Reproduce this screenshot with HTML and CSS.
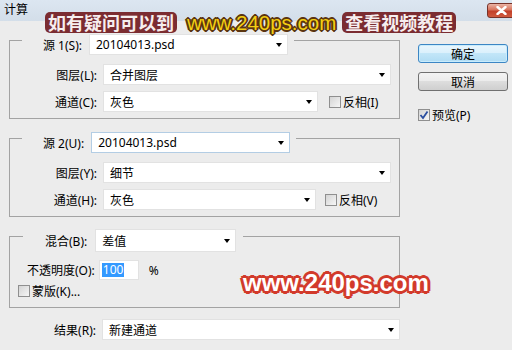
FILE: index.html
```html
<!DOCTYPE html>
<html lang="zh-CN">
<head>
  <meta charset="UTF-8">
  <title>计算</title>
  <link rel="stylesheet" href="styles.css">
</head>
<body>
  <div class="window">
    <div class="titlebar">
      <span class="title">计算</span>
      <span class="close">
        <svg width="11" height="9" viewBox="0 0 11 9"><path d="M1.5 1 L9.5 8 M9.5 1 L1.5 8" stroke="#fff" stroke-width="2.4" stroke-linecap="round"/></svg>
      </span>
    </div>

    <div class="content">
      <div class="main">
        <!-- source 1 -->
        <div class="group">
          <div class="group-head">
            <span>源 1(S):</span>
            <div class="select w-src">20104013.psd</div>
          </div>
          <div class="row">
            <span class="row-label">图层(L):</span>
            <div class="select w-wide">合并图层</div>
          </div>
          <div class="row">
            <span class="row-label">通道(C):</span>
            <div class="select w-chan">灰色</div>
            <span class="check"><i class="box"></i>反相(I)</span>
          </div>
        </div>

        <!-- source 2 -->
        <div class="group">
          <div class="group-head">
            <span>源 2(U):</span>
            <div class="select focus w-src">20104013.psd</div>
          </div>
          <div class="row">
            <span class="row-label">图层(Y):</span>
            <div class="select w-wide">细节</div>
          </div>
          <div class="row">
            <span class="row-label">通道(H):</span>
            <div class="select w-chan2">灰色</div>
            <span class="check check-tight"><i class="box"></i>反相(V)</span>
          </div>
        </div>

        <!-- blending -->
        <div class="group group-blend">
          <div class="group-head">
            <span>混合(B):</span>
            <div class="select tall w-blend">差值</div>
          </div>
          <div class="opacity-row">
            <span>不透明度(O):</span>
            <div class="input"><span class="selected">100</span></div>
            <span class="pct">%</span>
          </div>
          <div class="mask-row">
            <span class="check"><i class="box"></i>蒙版(K)...</span>
          </div>
        </div>

        <div class="row result-row">
          <span class="row-label">结果(R):</span>
          <div class="select w-result">新建通道</div>
        </div>
      </div>

      <div class="side">
        <div class="btn btn-default">确定</div>
        <div class="btn btn-cancel">取消</div>
        <span class="check preview">
          <i class="box">
            <svg width="10" height="10" viewBox="0 0 10 10"><path d="M1.5 5 L4 8 L8.5 1.5" fill="none" stroke="#2a4ea0" stroke-width="1.8"/></svg>
          </i>预览(P)
        </span>
      </div>
    </div>

    <!-- watermarks -->
    <div class="wm-top">
      <span class="wm-tag">如有疑问可以到</span>
      <span class="wm-url">www.240ps.com</span>
      <span class="wm-tag">查看视频教程</span>
    </div>
    <div class="wm-bottom">www.240ps.com</div>
  </div>
</body>
</html>
```

FILE: styles.css
```css
* {
  box-sizing: border-box;
}
body {
  margin: 0;
  width: 512px;
  height: 350px;
  overflow: hidden;
  background: #ececec;
  font-family: "Noto Sans", "Noto Sans CJK SC", sans-serif;
  font-size: 12px;
  color: #000;
}
.window {
  position: relative;
  height: 350px;
}
.titlebar {
  height: 21px;
  display: flex;
  justify-content: space-between;
  align-items: flex-start;
  padding-left: 4px;
  background: linear-gradient(#dce6f1, #d3dee9);
}
.title {
  line-height: 20px;
}
.close {
  margin-top: 3px;
  margin-right: -4px;
  width: 29px;
  height: 15px;
  border: 1px solid #77332a;
  border-radius: 3px;
  background: linear-gradient(#eab4a6, #d7735c 45%, #c2402a 55%, #cf5a3e);
  display: flex;
  align-items: center;
  justify-content: center;
}
.content {
  display: flex;
  gap: 18px;
  padding: 19px 0 0 9px;
}
.main {
  width: 391px;
}
.group {
  border: 1px solid #a3a3a3;
  padding-bottom: 6px;
  margin-bottom: 19px;
}
.group-head {
  display: flex;
  align-items: center;
  gap: 7px;
  width: fit-content;
  margin: -7px 0 9px 12px;
  padding: 0 6px 0 21px;
  background: #ececec;
}
.row {
  display: flex;
  align-items: center;
  height: 21px;
}
.row + .row {
  margin-top: 6px;
}
.row-label {
  width: 87px;
  margin-right: 6px;
  text-align: right;
}
.select {
  height: 21px;
  display: flex;
  align-items: center;
  justify-content: space-between;
  padding: 0 5px 0 6px;
  background: #fff;
  border: 1px solid #e2e2e2;
}
.select::after {
  content: "";
  border-left: 3.5px solid transparent;
  border-right: 3.5px solid transparent;
  border-top: 4px solid #000;
}
.select.focus {
  border-color: #b3cde4;
}
.select.tall {
  height: 23px;
}
.w-src { width: 199px; }
.w-wide { width: 288px; }
.w-chan { width: 215px; }
.w-chan2 { width: 213px; }
.w-blend { width: 141px; }
.w-result { width: 298px; }

.check {
  display: flex;
  align-items: center;
  gap: 2px;
  margin-left: 11px;
}
.check-tight {
  margin-left: 9px;
}
.box {
  width: 12px;
  height: 12px;
  border: 1px solid #8f8f8f;
  background: linear-gradient(135deg, #d4d4d4, #f6f6f6);
  display: flex;
  align-items: center;
  justify-content: center;
}

.group-blend {
  padding-bottom: 10px;
  margin-bottom: 11px;
}
.group-blend .group-head {
  gap: 8px;
  margin: -8px 0 8px 13px;
  padding: 0 7px 0 22px;
}
.opacity-row {
  display: flex;
  align-items: center;
  height: 20px;
  padding-left: 17px;
}
.input {
  width: 40px;
  height: 20px;
  margin-left: 4px;
  padding-left: 2px;
  display: flex;
  align-items: center;
  background: #fff;
  border: 1px solid #e2e2e2;
}
.selected {
  background: #3399ff;
  color: #fff;
  line-height: 14px;
  padding: 0 1px;
}
.pct {
  margin-left: 10px;
}
.mask-row {
  height: 13px;
  margin-top: 4px;
  display: flex;
  align-items: center;
}
.mask-row .check {
  margin-left: 8px;
}

.side {
  width: 90px;
  padding-top: 4px;
  display: flex;
  flex-direction: column;
}
.btn {
  height: 19px;
  border-radius: 3px;
  display: flex;
  align-items: center;
  justify-content: center;
}
.btn-default {
  border: 1px solid #3c86c4;
  background: linear-gradient(#eaf6fd, #d9f0fc 50%, #c2e6f8 50%, #b0dcf4);
  box-shadow: inset 0 0 0 1px #c9ecfc;
}
.btn-cancel {
  margin-top: 9px;
  border: 1px solid #707070;
  background: linear-gradient(#f3f3f3, #ebebeb 50%, #dddddd 50%, #cfcfcf);
}
.preview {
  margin: 15px 0 0 0;
}

.wm-top {
  position: absolute;
  left: 45px;
  top: 12px;
  display: flex;
  align-items: center;
}
.wm-tag {
  height: 21px;
  padding: 0 3px;
  border-radius: 5px;
  background: #7b2c31;
  color: #f6eeee;
  font-family: "Noto Sans CJK SC", sans-serif;
  font-weight: bold;
  font-size: 18px;
  line-height: 21px;
}
.wm-url {
  margin: 0 6px 0 10px;
  font-family: "Liberation Sans", sans-serif;
  font-size: 20.5px;
  line-height: 21px;
  color: #f4cf12;
  text-shadow: 1px 1px 0 #5b3510, -1px -1px 0 #5b3510, 1px -1px 0 #5b3510, -1px 1px 0 #5b3510, 2px 0 0 #5b3510, -2px 0 0 #5b3510, 0 2px 0 #5b3510, 0 -2px 0 #5b3510;
}
.wm-bottom {
  position: absolute;
  left: 243px;
  top: 271px;
  font-family: "Liberation Sans", sans-serif;
  font-weight: bold;
  font-size: 24px;
  line-height: 24px;
  color: #fff;
  text-shadow: 2px 2px 0 #d23a2b, -2px -2px 0 #d23a2b, 2px -2px 0 #d23a2b, -2px 2px 0 #d23a2b, 3px 0 0 #d23a2b, -3px 0 0 #d23a2b, 0 3px 0 #d23a2b, 0 -3px 0 #d23a2b;
}
```
